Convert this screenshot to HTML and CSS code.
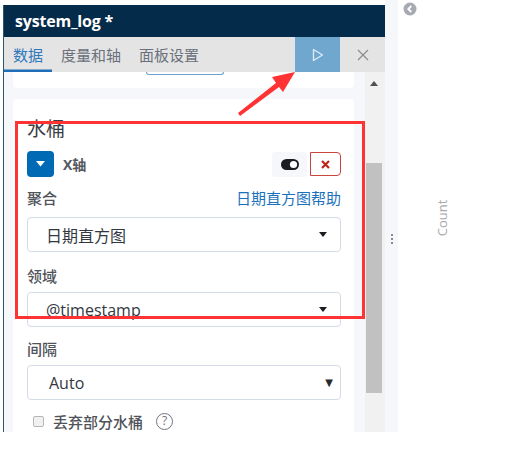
FILE: index.html
```html
<!DOCTYPE html>
<html>
<head>
<meta charset="utf-8">
<link rel="stylesheet" href="styles.css">
</head>
<body>
<div class="page">
  <div class="panel">
    <div class="header"><span class="title">system_log *</span></div>
    <div class="tabs">
      <div class="tab active">数据</div>
      <div class="tab">度量和轴</div>
      <div class="tab">面板设置</div>
      <div class="spacer"></div>
      <div class="play">
        <svg width="12" height="14" viewBox="0 0 12 14"><polygon points="1.5,1.5 1.5,12.5 10.5,7" fill="none" stroke="#dce9f5" stroke-width="1.4" stroke-linejoin="round"/></svg>
      </div>
      <div class="close">
        <svg width="12" height="12" viewBox="0 0 12 12"><path d="M1 1 L11 11 M11 1 L1 11" stroke="#8c8c8c" stroke-width="1.2"/></svg>
      </div>
    </div>
    <div class="body">
      <div class="content">
        <div class="card card-top"><div class="ghost-btn"></div></div>
        <div class="card card-main">
          <div class="heading">水桶</div>
          <div class="xrow">
            <div class="toggle-btn">
              <svg width="9" height="6" viewBox="0 0 9 6"><polygon points="0,0 9,0 4.5,5.5" fill="#fff"/></svg>
            </div>
            <div class="xlabel">X轴</div>
            <div class="grow"></div>
            <div class="switch-box">
              <svg width="18" height="11" viewBox="0 0 18 11"><rect x="0" y="0" width="18" height="11" rx="5.5" fill="#1a1c21"/><circle cx="12.5" cy="5.5" r="3.6" fill="#fff"/></svg>
            </div>
            <div class="remove-btn">
              <svg width="9" height="9" viewBox="0 0 9 9"><path d="M1 1 L8 8 M8 1 L1 8" stroke="#bd271e" stroke-width="2.2"/></svg>
            </div>
          </div>
          <div class="label-row first">
            <span class="label">聚合</span>
            <span class="link">日期直方图帮助</span>
          </div>
          <div class="select"><span>日期直方图</span><span class="caret"></span></div>
          <div class="label-row second"><span class="label">领域</span></div>
          <div class="select"><span>@timestamp</span><span class="caret"></span></div>
          <div class="label-row third"><span class="label">间隔</span></div>
          <div class="select native"><span>Auto</span><span class="caret-glyph">▼</span></div>
          <div class="check-row">
            <span class="checkbox"></span>
            <span class="check-text">丢弃部分水桶</span>
            <span class="help">?</span>
          </div>
        </div>
      </div>
      <div class="track">
        <div class="up"></div>
        <div class="thumb"></div>
      </div>
    </div>
  </div>
  <div class="resizer"><span class="dot"></span><span class="dot"></span><span class="dot"></span></div>
  <div class="chart">
    <div class="collapse">
      <svg width="14" height="14" viewBox="0 0 14 14"><circle cx="7" cy="7" r="6.5" fill="#a7a9b3"/><path d="M8.3 4 L5.3 7 L8.3 10" fill="none" stroke="#fff" stroke-width="1.8"/></svg>
    </div>
    <div class="axis-label">Count</div>
  </div>
  <div class="highlight"></div>
  <svg class="arrow" width="508" height="140" viewBox="0 0 508 140">
    <polygon points="238,113 276,83 272,77 295,72 283,92 279,87 240,116" fill="#ff3333"/>
  </svg>
</div>
</body>
</html>
```

FILE: styles.css
```css
* { box-sizing: border-box; }
html, body { margin: 0; padding: 0; background: #fff; }
body {
  font-family: "Open Sans", "Noto Sans CJK SC", sans-serif;
  color: #343741;
}
.page {
  position: relative;
  display: flex;
  width: 508px;
  height: 432px;
}
.panel {
  margin-top: 5px;
  margin-left: 3px;
  width: 382px;
  height: 427px;
  display: flex;
  flex-direction: column;
  border-left: 1px solid #2b5a6c;
}
.header {
  height: 32px;
  background: #042b49;
  display: flex;
  align-items: center;
  padding-left: 11px;
}
.title {
  color: #fff;
  font-weight: 700;
  font-size: 16px;
  letter-spacing: -0.2px;
}
.tabs {
  height: 35px;
  background: #e4e4e4;
  display: flex;
  align-items: stretch;
}
.tab {
  padding: 0 9px;
  display: flex;
  align-items: center;
  font-size: 15px;
  color: #6b717c;
}
.tab.active {
  color: #2f78bd;
  box-shadow: inset 0 -2.5px 0 #1f6fb8;
}
.spacer { flex: 1; }
.play {
  width: 45px;
  background: #6fa7cf;
  display: flex;
  align-items: center;
  justify-content: center;
}
.close {
  width: 45px;
  display: flex;
  align-items: center;
  justify-content: center;
}
.body {
  height: 360px;
  display: flex;
  background: #f5f7fa;
  overflow: hidden;
}
.content {
  width: 361px;
  padding: 0 11px 0 9px;
}
.card {
  background: #fff;
  border-radius: 4px;
}
.card-top {
  height: 16px;
  margin-bottom: 11px;
  border-radius: 0 0 4px 4px;
}
.ghost-btn {
  margin-left: 133px;
  width: 78px;
  height: 3px;
  border: 1px solid #6d9fd1;
  border-top: none;
  border-radius: 0 0 5px 5px;
}
.card-main {
  padding: 18px 13px 0 14px;
  height: 400px;
}
.heading {
  font-size: 19px;
  line-height: 24px;
  height: 24px;
  color: #3b3e45;
}
.xrow {
  margin-top: 10px;
  height: 26px;
  display: flex;
  align-items: center;
}
.toggle-btn {
  width: 27px;
  height: 26px;
  background: #006bb4;
  border-radius: 4px;
  display: flex;
  align-items: center;
  justify-content: center;
}
.xlabel {
  margin-left: 9px;
  font-size: 14px;
  font-weight: 700;
  color: #555861;
}
.grow { flex: 1; }
.switch-box {
  width: 35px;
  height: 25px;
  background: #f5f7fa;
  border-radius: 3px;
  display: flex;
  align-items: center;
  justify-content: center;
}
.remove-btn {
  margin-left: 3px;
  width: 31px;
  height: 24px;
  border: 1px solid #c9463f;
  border-radius: 0 4px 4px 0;
  display: flex;
  align-items: center;
  justify-content: center;
}
.label-row {
  height: 20px;
  display: flex;
  align-items: center;
  justify-content: space-between;
}
.label-row.first { margin-top: 10px; margin-bottom: 10px; }
.label-row.second { margin-top: 13px; margin-bottom: 7px; }
.label-row.third { margin-top: 11px; margin-bottom: 7px; }
.label {
  font-size: 15px;
  color: #50535a;
  font-weight: 500;
}
.link {
  font-size: 15px;
  color: #1a72bd;
}
.select {
  height: 35px;
  border: 1px solid #d5dbe6;
  border-radius: 4px;
  display: flex;
  align-items: center;
  justify-content: space-between;
  padding: 0 13px 0 18px;
  font-size: 16px;
  color: #343741;
}
.caret {
  width: 0;
  height: 0;
  border-left: 4px solid transparent;
  border-right: 4px solid transparent;
  border-top: 5px solid #1a1c21;
}
.select.native {
  padding: 0 7px 0 21px;
}
.caret-glyph {
  font-size: 10px;
  color: #2a2a2a;
  font-family: "DejaVu Sans", sans-serif;
}
.check-row {
  margin-top: 11px;
  height: 20px;
  display: flex;
  align-items: center;
}
.checkbox {
  margin-left: 6px;
  width: 11px;
  height: 11px;
  border: 1px solid #b4b6ba;
  border-radius: 2px;
  background: #f1f1f1;
}
.check-text {
  margin-left: 9px;
  font-size: 15px;
  color: #50535a;
  font-weight: 500;
}
.help {
  margin-left: 13px;
  width: 17px;
  height: 17px;
  border: 1.2px solid #6f7480;
  border-radius: 50%;
  font-size: 12px;
  line-height: 14px;
  text-align: center;
  color: #6f7480;
}
.track {
  width: 20px;
  background: #f1f1f1;
  padding-top: 9px;
  display: flex;
  flex-direction: column;
}
.up {
  margin-left: 5px;
  width: 0;
  height: 0;
  border-left: 4.5px solid transparent;
  border-right: 4.5px solid transparent;
  border-bottom: 5px solid #505050;
}
.thumb {
  margin-top: 77px;
  margin-left: 1px;
  width: 16px;
  height: 230px;
  background: #c1c1c1;
}
.resizer {
  width: 13px;
  height: 432px;
  background: #f5f7fa;
  display: flex;
  flex-direction: column;
  align-items: center;
  padding-top: 234px;
  gap: 2px;
}
.dot {
  width: 2px;
  height: 2px;
  background: #5f6470;
  border-radius: 1px;
}
.chart {
  position: relative;
  flex: 1;
  background: #fff;
}
.collapse {
  position: absolute;
  left: 5px;
  top: 2px;
  width: 14px;
  height: 14px;
}
.collapse svg { display: block; }
.axis-label {
  position: absolute;
  left: 19px;
  top: 210px;
  width: 50px;
  text-align: center;
  font-size: 13px;
  line-height: 16px;
  color: #a9a9a9;
  transform: rotate(-90deg);
}
.highlight {
  position: absolute;
  left: 15px;
  top: 121px;
  width: 350px;
  height: 198px;
  border: 3px solid #ff3333;
}
.arrow {
  position: absolute;
  left: 0;
  top: 0;
}
```
